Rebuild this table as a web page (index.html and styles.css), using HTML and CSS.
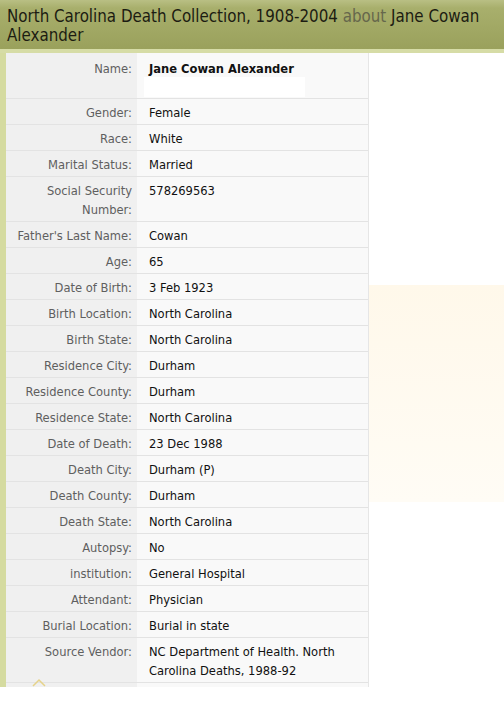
FILE: index.html
```html
<!DOCTYPE html>
<html lang="en">
<head>
<meta charset="utf-8">
<title>North Carolina Death Collection, 1908-2004 about Jane Cowan Alexander</title>
<link rel="stylesheet" href="styles.css">
</head>
<body>
<div class="header">
  <h1 class="title">North Carolina Death Collection, 1908-2004 <span class="about">about</span> Jane Cowan Alexander</h1>
</div>
<div class="strip"></div>
<div class="main">
  <div class="records">
    <div class="row row-name">
      <div class="label">Name:</div>
      <div class="value"><strong>Jane Cowan Alexander</strong><div class="namebox"></div></div>
    </div>
    <div class="row"><div class="label">Gender:</div><div class="value">Female</div></div>
    <div class="row"><div class="label">Race:</div><div class="value">White</div></div>
    <div class="row"><div class="label">Marital Status:</div><div class="value">Married</div></div>
    <div class="row"><div class="label">Social Security Number:</div><div class="value">578269563</div></div>
    <div class="row"><div class="label">Father's Last Name:</div><div class="value">Cowan</div></div>
    <div class="row"><div class="label">Age:</div><div class="value">65</div></div>
    <div class="row"><div class="label">Date of Birth:</div><div class="value">3 Feb 1923</div></div>
    <div class="row"><div class="label">Birth Location:</div><div class="value">North Carolina</div></div>
    <div class="row"><div class="label">Birth State:</div><div class="value">North Carolina</div></div>
    <div class="row"><div class="label">Residence City:</div><div class="value">Durham</div></div>
    <div class="row"><div class="label">Residence County:</div><div class="value">Durham</div></div>
    <div class="row"><div class="label">Residence State:</div><div class="value">North Carolina</div></div>
    <div class="row"><div class="label">Date of Death:</div><div class="value">23 Dec 1988</div></div>
    <div class="row"><div class="label">Death City:</div><div class="value">Durham (P)</div></div>
    <div class="row"><div class="label">Death County:</div><div class="value">Durham</div></div>
    <div class="row"><div class="label">Death State:</div><div class="value">North Carolina</div></div>
    <div class="row"><div class="label">Autopsy:</div><div class="value">No</div></div>
    <div class="row"><div class="label">institution:</div><div class="value">General Hospital</div></div>
    <div class="row"><div class="label">Attendant:</div><div class="value">Physician</div></div>
    <div class="row"><div class="label">Burial Location:</div><div class="value">Burial in state</div></div>
    <div class="row"><div class="label">Source Vendor:</div><div class="value">NC Department of Health. North Carolina Deaths, 1988-92</div></div>
    <div class="row row-last">
      <div class="label"><svg class="chevron" width="14" height="10" viewBox="0 0 14 10"><path d="M1 8 L7 2 L13 8" fill="none" stroke="#e6d38a" stroke-width="1.5"/></svg></div>
      <div class="value">&nbsp;</div>
    </div>
  </div>
  <div class="side">
    <div class="side-panel"></div>
  </div>
</div>
</body>
</html>
```
FILE: styles.css
```css
html, body {
  margin: 0;
  padding: 0;
  background: #ffffff;
}
body {
  width: 504px;
  height: 701px;
  overflow: hidden;
  font-family: "DejaVu Sans Condensed", "DejaVu Sans", sans-serif;
}
.header {
  height: 49px;
  box-sizing: border-box;
  padding: 7px 7px 0 7px;
  background: linear-gradient(to bottom, #b9bf84 0px, #a8af6c 8px, #9aa15c 49px);
}
.title {
  margin: 0;
  font-size: 16.8px;
  font-weight: normal;
  line-height: 19px;
  color: #1c1c12;
}
.about {
  color: #66674c;
}
.strip {
  height: 4px;
  background: #d6dca6;
}
.main {
  display: grid;
  grid-template-columns: 369px 1fr;
  height: 634px;
  overflow: hidden;
}
.records {
  border-left: 6px solid #d5dba0;
  border-right: 1px solid #e6e6e6;
  overflow: hidden;
  font-size: 12.8px;
  line-height: 19px;
}
.row {
  display: grid;
  grid-template-columns: 131px 1fr;
  border-bottom: 1px solid #e3e3e3;
}
.label {
  background: #f0f0f0;
  color: #5f5f5f;
  text-align: right;
  padding: 4px 5px 2px 6px;
}
.value {
  background: #f9f9f9;
  color: #111111;
  padding: 4px 8px 2px 12px;
}
.value strong {
  font-weight: bold;
  color: #111111;
}
.row-name .label {
  padding-top: 6px;
}
.row-name .value {
  padding-top: 6px;
  padding-bottom: 1px;
}
.row-name strong {
  display: block;
}
.namebox {
  margin: -1px 0 0 -5px;
  width: 161px;
  height: 20px;
  background: #ffffff;
}
.row-last .label {
  position: relative;
  height: 20px;
}
.chevron {
  position: absolute;
  left: 26px;
  top: -5px;
}
.side {
  padding-top: 232px;
}
.side-panel {
  height: 217px;
  background: linear-gradient(to bottom, #fff8ea, #fffcf5);
}
```
